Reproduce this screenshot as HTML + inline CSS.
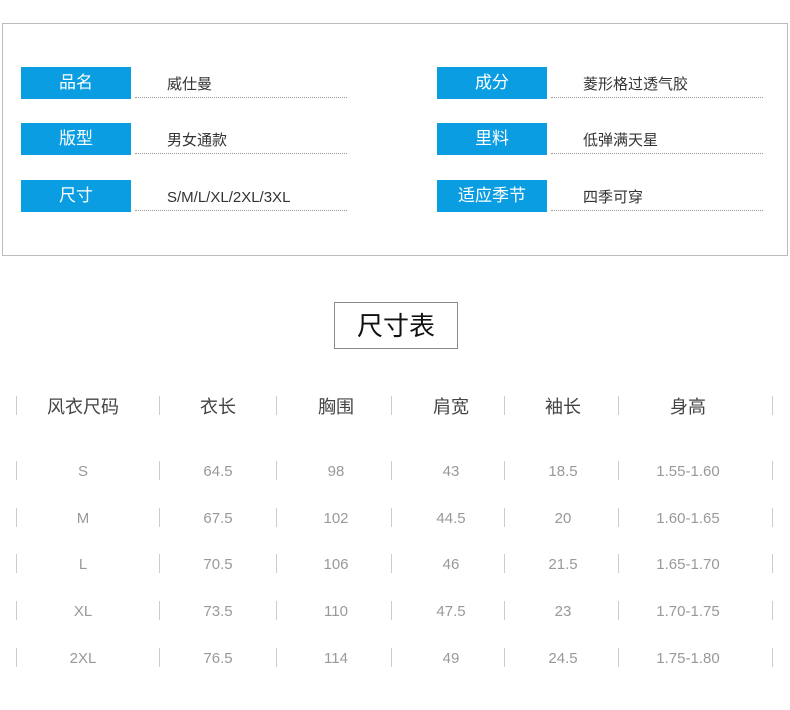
<!DOCTYPE html>
<html><head><meta charset="utf-8"><style>
body{margin:0;width:790px;height:710px;background:#fff;font-family:"Liberation Sans","Noto Sans CJK SC",sans-serif;position:relative;overflow:hidden}
.box{position:absolute;left:2px;top:23px;width:784px;height:231px;border:1px solid #bbb}
.lab{position:absolute;width:110px;height:32px;background:#0a9de2;color:#fff;font-size:17px;line-height:32px;text-align:center}
.val{position:absolute;width:212px;height:28px;border-bottom:1px dotted #999;color:#333;font-size:15px;line-height:30px;padding-left:32px;box-sizing:border-box}
.title{position:absolute;left:334px;top:302px;width:122px;height:45px;border:1px solid #888;font-size:26px;line-height:47px;text-align:center;color:#111}
.sep{position:absolute;width:1px;height:19px;background:#ccc}
.c{position:absolute;text-align:center;width:120px}
.h{font-size:18px;color:#444}
.d{font-size:15px;color:#999}
</style></head><body>
<div class="box"></div>
<div class="lab" style="left:21px;top:67px">品名</div><div class="val" style="left:135px;top:70px">威仕曼</div>
<div class="lab" style="left:21px;top:123px">版型</div><div class="val" style="left:135px;top:126px">男女通款</div>
<div class="lab" style="left:21px;top:180px">尺寸</div><div class="val" style="left:135px;top:183px">S/M/L/XL/2XL/3XL</div>
<div class="lab" style="left:437px;top:67px">成分</div><div class="val" style="left:551px;top:70px">菱形格过透气胶</div>
<div class="lab" style="left:437px;top:123px">里料</div><div class="val" style="left:551px;top:126px">低弹满天星</div>
<div class="lab" style="left:437px;top:180px">适应季节</div><div class="val" style="left:551px;top:183px">四季可穿</div>
<div class="title">尺寸表</div>
<div id="t"></div>
<script>
var xs=[16,159,276,391,504,618,772],cx=[83,218,336,451,563,688];
var rows=[["风衣尺码","衣长","胸围","肩宽","袖长","身高"],["S","64.5","98","43","18.5","1.55-1.60"],["M","67.5","102","44.5","20","1.60-1.65"],["L","70.5","106","46","21.5","1.65-1.70"],["XL","73.5","110","47.5","23","1.70-1.75"],["2XL","76.5","114","49","24.5","1.75-1.80"]];
var ys=[405,470,517,563,610,657],h="";
rows.forEach(function(r,i){var y=ys[i];xs.forEach(function(x){h+='<div class="sep" style="left:'+x+'px;top:'+(y-9)+'px"></div>'});
r.forEach(function(t,j){h+='<div class="c '+(i?'d':'h')+'" style="left:'+(cx[j]-60)+'px;top:'+(y-10)+'px;line-height:24px">'+t+'</div>'})});
document.getElementById('t').innerHTML=h;
</script>
</body></html>
